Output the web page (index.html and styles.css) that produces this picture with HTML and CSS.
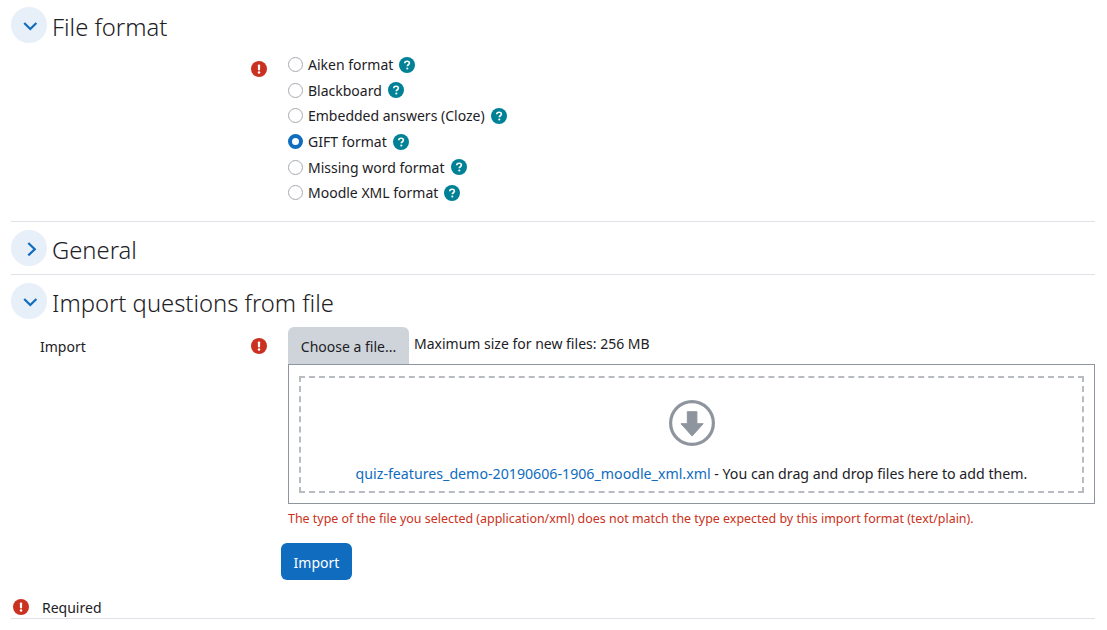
FILE: index.html
```html
<!DOCTYPE html>
<html lang="en">
<head>
<meta charset="utf-8">
<title>Import questions</title>
<link rel="stylesheet" href="styles.css">
</head>
<body>
<svg class="defs" width="0" height="0" aria-hidden="true">
  <defs>
    <symbol id="err" viewBox="0 0 16 16">
      <circle cx="8" cy="8" r="8" fill="#ca3120"/>
      <rect x="6.9" y="3.4" width="2.2" height="6" rx="0.8" fill="#fff"/>
      <circle cx="8" cy="11.6" r="1.25" fill="#fff"/>
    </symbol>
    <symbol id="help" viewBox="0 0 16 16">
      <circle cx="8" cy="8" r="8" fill="#008196"/>
      <path d="M5.7 6.3c0-1.3 1-2.1 2.4-2.1 1.4 0 2.3.8 2.3 1.9 0 1.700-2.100 1.600-2.100 3.200" fill="none" stroke="#fff" stroke-width="1.6"/>
      <circle cx="8.3" cy="11.5" r="1.05" fill="#fff"/>
    </symbol>
  </defs>
</svg>

<section class="section first">
  <div class="sec-head">
    <svg class="toggle" width="36" height="36" viewBox="0 0 36 36"><circle cx="18" cy="18" r="18" fill="#e7eff9"/><path d="M13.200 16 19.300 22 25.400 16" fill="none" stroke="#0f6cbf" stroke-width="2.200"/></svg>
    <h3>File format</h3>
  </div>
  <div class="form-row radios-row">
    <div class="label"></div>
    <div class="req"><svg class="ico"><use href="#err"/></svg></div>
    <div class="radios">
      <label class="radio"><span class="dot"></span>Aiken format<svg class="ico help"><use href="#help"/></svg></label>
      <label class="radio"><span class="dot"></span>Blackboard<svg class="ico help"><use href="#help"/></svg></label>
      <label class="radio"><span class="dot"></span>Embedded answers (Cloze)<svg class="ico help"><use href="#help"/></svg></label>
      <label class="radio"><span class="dot on"></span>GIFT format<svg class="ico help"><use href="#help"/></svg></label>
      <label class="radio"><span class="dot"></span>Missing word format<svg class="ico help"><use href="#help"/></svg></label>
      <label class="radio"><span class="dot"></span>Moodle XML format<svg class="ico help"><use href="#help"/></svg></label>
    </div>
  </div>
</section>

<section class="section collapsed">
  <div class="sec-head">
    <svg class="toggle" width="36" height="36" viewBox="0 0 36 36"><circle cx="18" cy="18" r="18" fill="#e7eff9"/><path d="M17.300 13 23.800 19.200 17.300 25.400" fill="none" stroke="#0f6cbf" stroke-width="2.200"/></svg>
    <h3>General</h3>
  </div>
</section>

<section class="section last">
  <div class="sec-head">
    <svg class="toggle" width="36" height="36" viewBox="0 0 36 36"><circle cx="18" cy="18" r="18" fill="#e7eff9"/><path d="M13.200 16 19.300 22 25.400 16" fill="none" stroke="#0f6cbf" stroke-width="2.200"/></svg>
    <h3>Import questions from file</h3>
  </div>
  <div class="form-row import-row">
    <div class="label">Import</div>
    <div class="req"><svg class="ico"><use href="#err"/></svg></div>
    <div class="field">
      <div class="picker">
        <span class="btn-file">Choose a file...</span>
        <span class="max">Maximum size for new files: 256 MB</span>
      </div>
      <div class="box">
        <div class="drop">
          <svg class="dl" width="46" height="46" viewBox="0 0 46 46">
            <circle cx="23" cy="23" r="21.400" fill="none" stroke="#8f959e" stroke-width="3.200"/>
            <path d="M18.300 11.700h9.600v12h6.300L23.100 36 12 23.700h6.300z" fill="#8f959e" stroke="#8f959e" stroke-width="1" stroke-linejoin="round"/>
          </svg>
          <p class="drop-text"><a class="file-link">quiz-features_demo-20190606-1906_moodle_xml.xml</a> - You can drag and drop files here to add them.</p>
        </div>
      </div>
      <p class="error">The type of the file you selected (application/xml) does not match the type expected by this import format (text/plain).</p>
    </div>
  </div>
  <div class="actions"><button class="btn-primary" type="button">Import</button></div>
</section>

<footer class="required">
  <svg class="ico"><use href="#err"/></svg>
  <span>Required</span>
</footer>
</body>
</html>
```
FILE: styles.css
```css
* { box-sizing: border-box; }
html, body { margin: 0; padding: 0; background: #fff; }
body {
  width: 1107px;
  height: 630px;
  overflow: hidden;
  padding: 7px 12px 0 11px;
  font-family: "Noto Sans", "Open Sans", sans-serif;
  font-size: 14px;
  line-height: 21px;
  color: #1d2125;
}
.defs { position: absolute; }
.section { border-bottom: 1px solid #dee2e6; }
.first { height: 215px; }
.collapsed { height: 53px; padding-top: 8px; }
.last { padding-top: 8px; border-bottom: 0; }
.sec-head { display: flex; align-items: flex-start; gap: 5px; height: 36px; }
.sec-head h3 {
  margin: 2px 0 0;
  font-weight: 300;
  font-size: 23.8px;
  line-height: 36px;
  color: #1d2125;
}
.toggle { display: block; flex: none; }
.form-row { display: flex; }
.label { width: 212px; padding-left: 29px; flex: none; }
.req { width: 65px; flex: none; padding-left: 28px; }
.ico { width: 16px; height: 16px; display: block; }
.radios-row { padding-top: 1px; }
.radios-row .req { padding-top: 17px; }
.radios { padding-top: 8px; }
.radio { display: flex; align-items: center; height: 25.6px; }
.dot {
  width: 15px;
  height: 15px;
  border-radius: 50%;
  border: 1px solid #a6aab0;
  margin-right: 5px;
  background: #fff;
  flex: none;
}
.dot.on { border: 4.500px solid #0f6cbf; }
.help { margin-left: 6px; }
.import-row { margin-top: 8px; }
.import-row .label { padding-top: 9px; }
.import-row .req { padding-top: 11px; }
.field { flex: 1; min-width: 0; }
.picker { display: flex; align-items: flex-start; gap: 5px; }
.btn-file {
  width: 121px;
  height: 37px;
  padding-top: 2px;
  background: #ced4da;
  border-radius: 6px 6px 0 0;
  display: flex;
  align-items: center;
  justify-content: center;
}
.max { padding-top: 6px; }
.box {
  height: 140px;
  border: 1px solid #8f959e;
  padding: 11px 10px 10px;
}
.drop {
  height: 117px;
  border: 2px dashed #b8bcc1;
  display: flex;
  flex-direction: column;
  align-items: center;
  padding-top: 22px;
}
.dl { display: block; flex: none; }
.drop-text { margin: 17px 0 0; font-size: 14.2px; }
.file-link { color: #0f6cbf; }
.error { margin: 4px 0 0; font-size: 12.44px; line-height: 22px; color: #ca3120; }
.actions { margin-top: 13px; padding-left: 270px; }
.btn-primary {
  width: 71px;
  height: 37px;
  padding: 2px 0 0;
  border: 0;
  border-radius: 6px;
  background: #0f6cbf;
  color: #fff;
  font: inherit;
}
.required {
  margin-top: 19px;
  height: 20px;
  border-bottom: 1px solid #dee2e6;
  display: flex;
  align-items: flex-start;
  gap: 13px;
  padding-left: 2px;
}
.required span { line-height: 21px; margin-top: -2px; }
```
